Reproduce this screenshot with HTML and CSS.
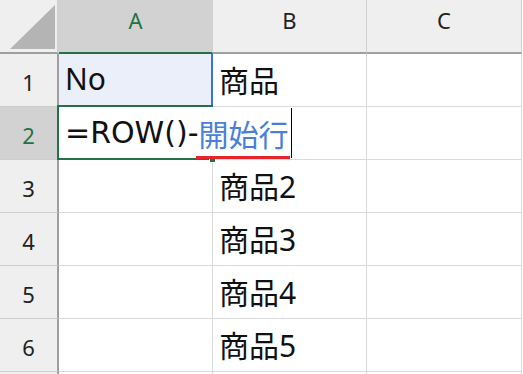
FILE: index.html
```html
<!DOCTYPE html>
<html lang="ja">
<head>
<meta charset="utf-8">
<title>Sheet</title>
<link rel="stylesheet" href="styles.css">
</head>
<body>
<div class="sheet">
  <div class="corner"><svg class="tri" width="57" height="52" viewBox="0 0 57 52"><polygon points="55,5 55,49 10,49" fill="#b4b4b4"/></svg></div>
  <div class="ch ch-active">A</div>
  <div class="ch">B</div>
  <div class="ch">C</div>

  <div class="rh">1</div>
  <div class="cell ref">No</div>
  <div class="cell">商品</div>
  <div class="cell"></div>

  <div class="rh rh-active">2</div>
  <div class="cell active"><div class="editor"><span class="formula">=ROW()-</span><span class="name">開始行</span><span class="caret"></span></div></div>
  <div class="cell"></div>
  <div class="cell"></div>

  <div class="rh">3</div>
  <div class="cell"></div>
  <div class="cell">商品2</div>
  <div class="cell"></div>

  <div class="rh">4</div>
  <div class="cell"></div>
  <div class="cell">商品3</div>
  <div class="cell"></div>

  <div class="rh">5</div>
  <div class="cell"></div>
  <div class="cell">商品4</div>
  <div class="cell"></div>

  <div class="rh">6</div>
  <div class="cell"></div>
  <div class="cell">商品5</div>
  <div class="cell"></div>

  <div class="rh"></div>
  <div class="cell"></div>
  <div class="cell"></div>
  <div class="cell"></div>
</div>
</body>
</html>
```

FILE: styles.css
```css
html, body {
  margin: 0;
  padding: 0;
  background: #ffffff;
  overflow: hidden;
}

.sheet {
  display: grid;
  grid-template-columns: 59px 154px 154px 155px;
  grid-template-rows: 54px repeat(7, 53px);
  width: 523px;
  height: 374px;
  overflow: hidden;
}

.corner {
  box-sizing: border-box;
  background: #efefef;
  border-right: 2px solid #d0d0d0;
  border-bottom: 2px solid #9f9f9f;
}

.tri {
  display: block;
}

.ch {
  box-sizing: border-box;
  background: #efefef;
  border-right: 1px solid #d0d0d0;
  border-bottom: 2px solid #9f9f9f;
  display: flex;
  justify-content: center;
  align-items: flex-start;
  padding-top: 6px;
  font-family: "Noto Sans", "Liberation Sans", sans-serif;
  font-size: 22px;
  line-height: 28px;
  color: #222222;
}

.ch-active {
  background: #d2d2d2;
  color: #217346;
  border-bottom-color: #217346;
}

.rh {
  box-sizing: border-box;
  background: #efefef;
  border-right: 2px solid #9f9f9f;
  border-bottom: 1px solid #cdcdcd;
  display: flex;
  justify-content: center;
  align-items: center;
  padding-top: 3px;
  font-family: "Noto Sans", "Liberation Sans", sans-serif;
  font-size: 22px;
  color: #222222;
}

.rh-active {
  background: #d2d2d2;
  color: #217346;
}

.cell {
  position: relative;
  box-sizing: border-box;
  border-right: 1px solid #dadada;
  border-bottom: 1px solid #dadada;
  display: flex;
  align-items: center;
  padding-left: 6px;
  padding-bottom: 3px;
  font-family: "Noto Sans", "Noto Sans CJK JP", sans-serif;
  font-size: 30px;
  color: #111111;
  white-space: nowrap;
}

.ref {
  background: #eaeff9;
}

.ref::after {
  content: "";
  position: absolute;
  top: 0;
  bottom: -1px;
  right: -1px;
  width: 2px;
  background: #3a74d6;
}

.active {
  z-index: 2;
  padding: 0;
}

.active::after {
  content: "";
  position: absolute;
  top: -2px;
  left: -2px;
  right: -1px;
  bottom: -1px;
  border: 2px solid #217346;
}

.active::before {
  content: "";
  position: absolute;
  right: -4px;
  bottom: -4px;
  width: 5px;
  height: 5px;
  background: #217346;
  border: 1px solid #ffffff;
  z-index: 3;
}

.editor {
  position: absolute;
  left: 0;
  top: 0;
  bottom: 1px;
  z-index: 4;
  display: flex;
  align-items: center;
  padding-left: 6px;
  padding-right: 1px;
  background: #ffffff;
}

.formula {
  font-family: "DejaVu Sans", "Noto Sans", sans-serif;
  font-size: 30px;
}

.name {
  position: relative;
  color: #4a7fd8;
}

.name::after {
  content: "";
  position: absolute;
  left: -3px;
  right: -1px;
  bottom: -4px;
  height: 3px;
  background: #e3262b;
}

.caret {
  display: block;
  width: 1px;
  height: 50px;
  margin-left: 2px;
  background: #000000;
}
```
